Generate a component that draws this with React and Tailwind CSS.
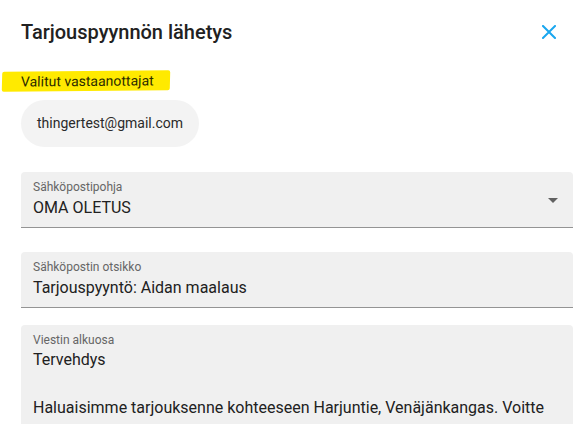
import React from "react";

const Field = ({ label, children, className = "" }) => (
  <div
    className={`bg-[#f0f0f0] rounded-t-[4px] border-b border-[#949494] pl-3 pr-3 pt-[7px] ${className}`}
  >
    <div className="text-[12px] leading-4 text-[#666666]">{label}</div>
    {children}
  </div>
);

const App = () => {
  return (
    <div
      className="w-[578px] h-[424px] overflow-hidden bg-white text-[#212121]"
      style={{ fontFamily: "Roboto, 'Liberation Sans', sans-serif" }}
    >
      <div className="flex items-center justify-between pl-[21px] pr-[22px] pt-[20px]">
        <h2 className="text-[20px] leading-6 font-medium text-[#212121]">
          Tarjouspyynnön lähetys
        </h2>
        <svg width="14" height="14" viewBox="0 0 14 14" className="text-[#1aa7ef]">
          <path
            d="M1 1L13 13M13 1L1 13"
            stroke="currentColor"
            strokeWidth="2"
            strokeLinecap="square"
          />
        </svg>
      </div>

      <div className="mt-[27px] pl-[2px] flex">
        <span className="block bg-[#ffea00] pl-[19px] pr-[16px] h-[20px] leading-5 text-[14px] text-[#2b2b00] -skew-x-2 -rotate-[0.5deg] rounded-[2px]">
          Valitut vastaanottajat
        </span>
      </div>

      <div className="pl-[21px] pr-[5px]">
        <div className="mt-[9px] flex w-fit items-center h-[47px] px-4 rounded-full bg-[#f3f3f3] text-[14px] text-[#2a2a2a]">
          thingertest@gmail.com
        </div>

        <Field label="Sähköpostipohja" className="mt-[25px] h-[56px] relative">
          <div className="mt-[3px] text-[16px] leading-5">OMA OLETUS</div>
          <svg
            width="24"
            height="24"
            viewBox="0 0 24 24"
            className="absolute right-[8px] top-[16px] text-[#616161]"
          >
            <path d="M7 10l5 5 5-5z" fill="currentColor" />
          </svg>
        </Field>

        <Field label="Sähköpostin otsikko" className="mt-6 h-[56px]">
          <div className="mt-[3px] text-[16px] leading-5">
            Tarjouspyyntö: Aidan maalaus
          </div>
        </Field>

        <Field label="Viestin alkuosa" className="mt-[17px] h-[200px]">
          <div className="text-[16px] leading-6">
            <p>Tervehdys</p>
            <p>&nbsp;</p>
            <p>
              Haluaisimme tarjouksenne kohteeseen Harjuntie, Venäjänkangas. Voitte
              antaa tarjouksenne vastaamalla tähän sähköpostiin tai soittamalla.
            </p>
          </div>
        </Field>
      </div>
    </div>
  );
};

export default App;
